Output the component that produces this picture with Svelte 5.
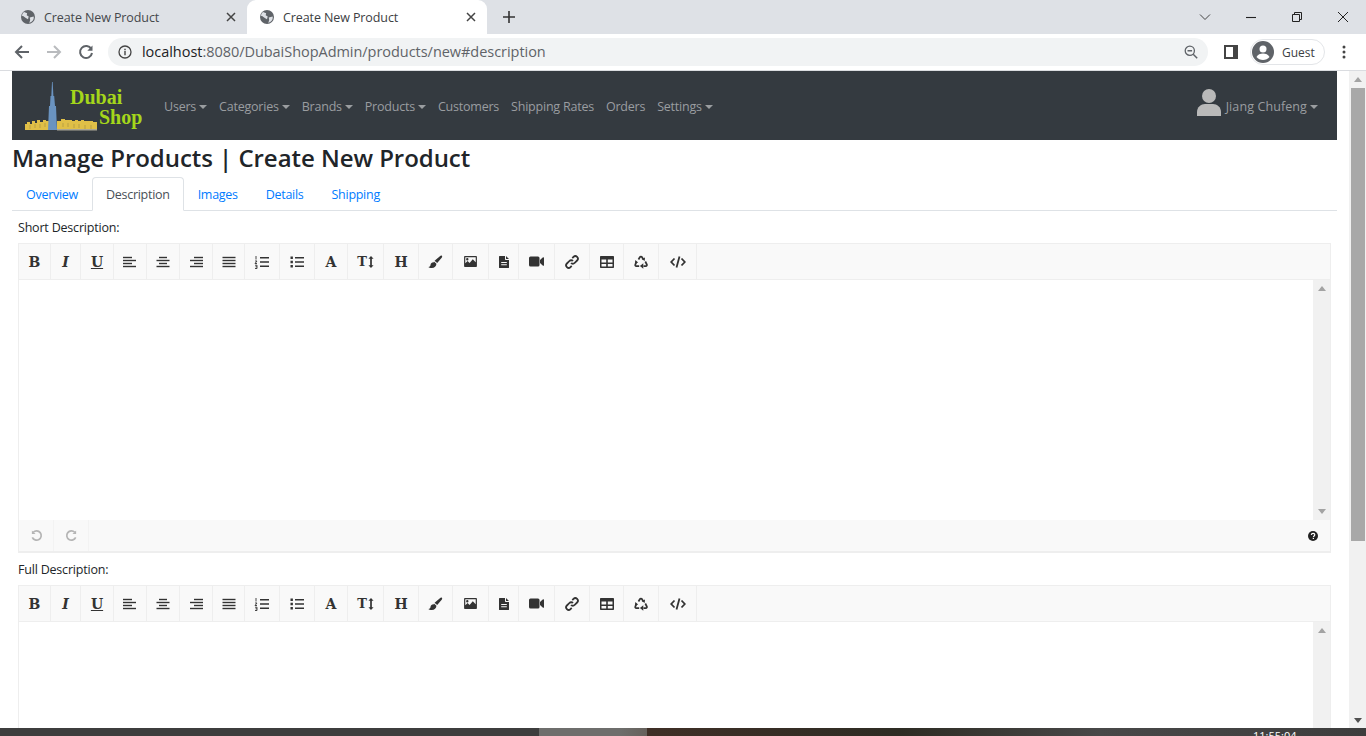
<script>
  const navItems = [
    { label: 'Users', caret: true },
    { label: 'Categories', caret: true },
    { label: 'Brands', caret: true },
    { label: 'Products', caret: true },
    { label: 'Customers', caret: false },
    { label: 'Shipping Rates', caret: false },
    { label: 'Orders', caret: false },
    { label: 'Settings', caret: true }
  ];
  const tabs = ['Overview', 'Description', 'Images', 'Details', 'Shipping'];
  const tools = [
    { w: 32, t: 'B' }, { w: 30, t: 'I', cls: 'it' }, { w: 33, t: 'U', cls: 'un' },
    { w: 33, i: 'left' }, { w: 33, i: 'center' }, { w: 33, i: 'right' }, { w: 32, i: 'just' },
    { w: 35, i: 'ol' }, { w: 35, i: 'ul' }, { w: 33, t: 'A' }, { w: 36, i: 'size' },
    { w: 35, t: 'H' }, { w: 34, i: 'brush' }, { w: 36, i: 'pic' }, { w: 30, i: 'file' },
    { w: 36, i: 'video' }, { w: 35, i: 'link' }, { w: 34, i: 'table' }, { w: 35, i: 'recycle' }, { w: 38, i: 'code' }
  ];
  const lines = {
    left: [[1, 2.5, 9], [1, 5.5, 13], [1, 8.5, 9], [1, 11.5, 13]],
    center: [[4, 2.5, 8], [1.500, 5.5, 13], [4, 8.5, 8], [1.500, 11.5, 13]],
    right: [[6, 2.5, 9], [2, 5.5, 13], [6, 8.5, 9], [2, 11.5, 13]],
    just: [[1.500, 2.5, 13], [1.500, 5.5, 13], [1.500, 8.5, 13], [1.500, 11.5, 13]]
  };
</script>

{#snippet globe()}
  <svg class="globe" viewBox="0 0 16 16" width="16" height="16" aria-hidden="true">
    <circle cx="8" cy="8" r="8" fill="#5f6368" />
    <path d="M3.500 2.200 7 3.800 6.500 6 8.800 7.500 8 10.500 5.500 9 2 6.500 1 7C1.200 5 2 3.300 3.500 2.200ZM10 8.500l4.500-1C15 10 14 12 12 13.500L9.500 14.800 10.500 11.500Z" fill="#dee1e6" />
  </svg>
{/snippet}

{#snippet tool(b)}
  {#if b.t}
    <span class="glyph {b.cls ?? ''}">{b.t}</span>
  {:else if lines[b.i]}
    <svg viewBox="0 0 16 14" width="16" height="14" aria-hidden="true">
      {#each lines[b.i] as l}<rect x={l[0]} y={l[1] - 0.7} width={l[2]} height="1.4" fill="#333" />{/each}
    </svg>
  {:else if b.i === 'ol'}
    <svg viewBox="0 0 16 14" width="16" height="14" aria-hidden="true">
      <path d="M6 2h9v1.400H6zM6 6.300h9v1.400H6zM6 10.600h9v1.400H6z" fill="#333" />
      <path d="M2 1v3.500M1 6h2L1 8.500h2M1 10.200h2v3.300H1M1.500 11.800H3" stroke="#333" fill="none" stroke-width="0.900" />
    </svg>
  {:else if b.i === 'ul'}
    <svg viewBox="0 0 16 14" width="16" height="14" aria-hidden="true">
      <path d="M6 2h9v1.500H6zM6 6.200h9v1.500H6zM6 10.500h9V12H6z" fill="#333" />
      <path d="M1.500 1.500h2.400v2.400H1.500zM1.500 5.800h2.400v2.400H1.500zM1.500 10h2.400v2.400H1.500z" fill="#333" />
    </svg>
  {:else if b.i === 'size'}
    <span class="sizer"><span class="glyph small">T</span>
      <svg viewBox="0 0 7 14" width="6" height="12" aria-hidden="true"><path d="M3.500 0 6.500 3.200H4.500v7.600h2L3.500 14 .5 10.800h2V3.200h-2Z" fill="#333" /></svg>
    </span>
  {:else if b.i === 'brush'}
    <svg viewBox="0 0 16 14" width="15" height="14" aria-hidden="true">
      <path d="M14.800.4c.6.500.3 1.400-.2 2L9.800 8 7 5.600 12.700.8c.7-.6 1.500-.9 2.100-.4ZM6.300 6.400 9 8.800c-.2 2.500-2 4.700-5 4.700-1.700 0-3-.6-3.500-1.200 1.600-.2 2-1 2.200-2.400.2-1.500 1.700-2.700 3.600-2.500Z" fill="#333" />
    </svg>
  {:else if b.i === 'pic'}
    <svg viewBox="0 0 14 12" width="13" height="11" aria-hidden="true">
      <path fill-rule="evenodd" d="M.8 0h12.400c.4 0 .8.400.8.800v10.400c0 .4-.4.800-.8.800H.8c-.4 0-.8-.4-.8-.8V.8C0 .4.400 0 .8 0ZM1.300 1.300v6.500l2.500-2.300 2.200 2L9.500 3.500 12.700 6.800V1.300ZM3.500 2.200a1.300 1.300 0 1 0 0 2.600 1.300 1.300 0 0 0 0-2.600Z" fill="#333" />
    </svg>
  {:else if b.i === 'file'}
    <svg viewBox="0 0 10 12" width="10" height="12" aria-hidden="true">
      <path fill-rule="evenodd" d="M.6 0H6v3.200c0 .4.300.7.700.7H10v7.500c0 .3-.3.600-.6.600H.6c-.3 0-.6-.3-.6-.6V.6C0 .3.300 0 .6 0ZM2.200 6v1h5.600V6Zm0 2.200v1h5.600v-1ZM7 0l3 3H7Z" fill="#333" />
    </svg>
  {:else if b.i === 'video'}
    <svg viewBox="0 0 15 11" width="15" height="11" aria-hidden="true">
      <rect x="0" y="0.500" width="10.500" height="10" rx="1.500" fill="#333" />
      <path d="M11 4 14 1.300c.4-.3 1-.1 1 .4v7.600c0 .5-.6.700-1 .4L11 7Z" fill="#333" />
    </svg>
  {:else if b.i === 'link'}
    <svg viewBox="0 0 14 14" width="14" height="14" aria-hidden="true" fill="none" stroke="#333" stroke-width="1.800">
      <path d="M6 8a2.500 2.500 0 0 0 3.600 0l2.500-2.500a2.500 2.500 0 0 0-3.600-3.600L7.300 3.100" />
      <path d="M8 6a2.500 2.500 0 0 0-3.600 0L1.900 8.500a2.500 2.500 0 0 0 3.600 3.600l1.200-1.200" />
    </svg>
  {:else if b.i === 'table'}
    <svg viewBox="0 0 14 12" width="14" height="12" aria-hidden="true">
      <path fill-rule="evenodd" d="M1 0h12c.6 0 1 .4 1 1v10c0 .6-.4 1-1 1H1c-.6 0-1-.4-1-1V1c0-.6.400-1 1-1Zm.5 3.500v3h4.700v-3Zm6.300 0v3h4.700v-3Zm-6.300 4.500v2.500h4.700V8Zm6.300 0v2.500h4.700V8Z" fill="#333" />
    </svg>
  {:else if b.i === 'recycle'}
    <svg viewBox="0 0 14 14" width="14" height="14" aria-hidden="true" fill="none" stroke="#333" stroke-width="1.700">
      <path d="M4.500 4.500 5.800 2.300c.4-.8 1.800-.8 2.300 0l1.100 1.900" />
      <path d="M11.300 6.500l1.500 3c.4.800-.1 1.600-1 1.600H9.500" />
      <path d="M5.200 11.100H2.300c-.9 0-1.400-.9-1-1.600l1.300-2.600" />
      <path d="M7.600 3.900l3.100 2 .3-3.300ZM1.300 5.100l-.4 3.300 3.300-1ZM9.300 8.300v5.400L5.900 11Z" fill="#333" stroke="none" />
    </svg>
  {:else if b.i === 'code'}
    <svg viewBox="0 0 16 12" width="16" height="12" aria-hidden="true" fill="none" stroke="#333" stroke-width="1.800">
      <path d="M4.500 2.500 1.200 6l3.300 3.500M11.500 2.500 14.800 6l-3.300 3.500M9.500.6 6.500 11.400" />
    </svg>
  {/if}
{/snippet}

{#snippet editor(label, showStatus)}
  <div class="label">{label}</div>
  <div class="editor">
    <div class="toolbar">
      {#each tools as b}
        <span class="tbtn" style="width:{b.w}px">{@render tool(b)}</span>
      {/each}
    </div>
    <div class="area">
      <div class="text"></div>
      <div class="inner-sb">
        <i class="up"></i>
        {#if showStatus}<i class="down"></i>{/if}
      </div>
    </div>
    {#if showStatus}
      <div class="status">
        <span class="hbtn">
          <svg viewBox="0 0 14 14" width="13" height="13" aria-hidden="true" fill="none" stroke="#b5b5b5" stroke-width="1.800">
            <path d="M3.500 3.500a5 5 0 1 1-1 5.500" /><path d="M2 1.500v4h4z" fill="#b5b5b5" stroke="none" />
          </svg>
        </span>
        <span class="hbtn">
          <svg viewBox="0 0 14 14" width="13" height="13" aria-hidden="true" fill="none" stroke="#b5b5b5" stroke-width="1.800">
            <path d="M10.500 3.500a5 5 0 1 0 1 5.500" /><path d="M12 1.500v4H8z" fill="#b5b5b5" stroke="none" />
          </svg>
        </span>
        <svg class="help" viewBox="0 0 10 10" width="10" height="10" aria-hidden="true">
          <circle cx="5" cy="5" r="5" fill="#222" />
          <path d="M3.300 3.900C3.400 2.900 4.100 2.300 5.100 2.300s1.700.6 1.700 1.500c0 1.200-1.300 1.200-1.300 2.200" fill="none" stroke="#fff" stroke-width="1.200" />
          <rect x="4.700" y="6.800" width="1.300" height="1.200" fill="#fff" />
        </svg>
      </div>
    {/if}
  </div>
{/snippet}

<div class="screen">
  <header class="chrome">
    <div class="strip">
      <div class="tab">
        {@render globe()}
        <span class="title">Create New Product</span>
        <svg class="x" viewBox="0 0 10 10" width="10" height="10" aria-hidden="true"><path d="M1 1l8 8M9 1 1 9" stroke="#444" stroke-width="1.500" /></svg>
      </div>
      <div class="tab active">
        {@render globe()}
        <span class="title">Create New Product</span>
        <svg class="x" viewBox="0 0 10 10" width="10" height="10" aria-hidden="true"><path d="M1 1l8 8M9 1 1 9" stroke="#444" stroke-width="1.500" /></svg>
      </div>
      <svg class="plus" viewBox="0 0 12 12" width="12" height="12" aria-hidden="true"><path d="M6 0v12M0 6h12" stroke="#333" stroke-width="1.600" /></svg>
      <div class="winctl">
        <svg viewBox="0 0 12 12" width="12" height="12" aria-hidden="true"><path d="M1 3.500 6 8.500 11 3.500" fill="none" stroke="#444" /></svg>
        <svg viewBox="0 0 12 12" width="12" height="12" aria-hidden="true"><path d="M1 6.500h10" stroke="#222" stroke-width="1.100" /></svg>
        <svg viewBox="0 0 12 12" width="12" height="12" aria-hidden="true"><path d="M1.500 3.500h7v7h-7zM3.500 3.500v-2h7v7h-2" fill="none" stroke="#222" /></svg>
        <svg viewBox="0 0 12 12" width="12" height="12" aria-hidden="true"><path d="M1 1l10 10M11 1 1 11" stroke="#222" /></svg>
      </div>
    </div>
    <div class="bar">
      <svg class="nav" viewBox="0 0 16 16" width="16" height="16" aria-hidden="true"><path d="M15 8H2M8 2 2 8l6 6" fill="none" stroke="#5f6368" stroke-width="2" /></svg>
      <svg class="nav" viewBox="0 0 16 16" width="16" height="16" aria-hidden="true"><path d="M1 8h13M8 2l6 6-6 6" fill="none" stroke="#b9bbbe" stroke-width="2" /></svg>
      <svg class="nav" viewBox="0 0 16 16" width="16" height="16" aria-hidden="true"><path d="M13.300 5A6 6 0 1 0 14 9" fill="none" stroke="#5f6368" stroke-width="2" /><path d="M14.500 1.500v5.200H9.300z" fill="#5f6368" /></svg>
      <div class="omni">
        <svg viewBox="0 0 14 14" width="14" height="14" aria-hidden="true"><circle cx="7" cy="7" r="6" fill="none" stroke="#444" stroke-width="1.300" /><path d="M7 6v4.200M7 3.800v1.400" stroke="#444" stroke-width="1.400" /></svg>
        <span class="url"><b>localhost</b>:8080/DubaiShopAdmin/products/new#description</span>
        <svg class="zoomico" viewBox="0 0 14 14" width="14" height="14" aria-hidden="true"><circle cx="5.800" cy="5.800" r="4.600" fill="none" stroke="#5f6368" stroke-width="1.300" /><path d="M3.500 5.800h4.600M9.200 9.200l4 4" stroke="#5f6368" stroke-width="1.500" /></svg>
      </div>
      <svg class="side" viewBox="0 0 14 14" width="14" height="14" aria-hidden="true"><path fill-rule="evenodd" d="M0 0h14v14H0zM2 2v10h7V2z" fill="#444" /></svg>
      <div class="guest">
        <svg viewBox="0 0 22 22" width="22" height="22" aria-hidden="true"><circle cx="11" cy="11" r="11" fill="#5f6368" /><circle cx="11" cy="8" r="3.500" fill="#fff" /><path d="M4.500 16c1-2.500 4-3.500 6.500-3.500s5.500 1 6.500 3.500c-1.500 2-4 3-6.500 3s-5-1-6.500-3Z" fill="#fff" /></svg>
        <span>Guest</span>
      </div>
      <svg class="kebab" viewBox="0 0 4 14" width="4" height="14" aria-hidden="true"><circle cx="2" cy="2" r="1.500" fill="#444" /><circle cx="2" cy="7" r="1.500" fill="#444" /><circle cx="2" cy="12" r="1.500" fill="#444" /></svg>
    </div>
  </header>

  <div class="viewport">
    <main class="page">
      <nav class="navbar">
        <div class="logo">
          <svg viewBox="0 0 73 49" width="73" height="49" aria-hidden="true">
            <path d="M0 48V42H2V40H5V42H7V39H10V41H12V38H15V40H18V38H21V39H24V48ZM32 48V39H36V37H40V38H44V38H47V39H50V38H53V39H56V38H59V39H62V39H65V39H68V40H72V48Z" fill="#e0bf47" />
            <path d="M5 43v4M10 42v4M15 42v4M20 41v4M38 41v4M43 41v4M49 42v4M54 42v4M60 43v4M66 43v4" stroke="#b89f45" stroke-width="1" />
            <path d="M32 47h40v1.500H32z" fill="#a9a595" />
            <path d="M23 48 24 24H25L25.500 14H26.300L27 0 27.700 0 28.400 14H29.200L30 24H31L32 48Z" fill="#6a93c0" />
          </svg>
          <div class="word"><span>Dubai</span><span class="shop">Shop</span></div>
        </div>
        <ul class="links">
          {#each navItems as n}
            <li class:caret={n.caret}>{n.label}</li>
          {/each}
        </ul>
        <div class="user">
          <svg viewBox="0 0 24 27" width="24" height="27" aria-hidden="true"><circle cx="12" cy="7" r="7" fill="#b9b9b9" /><path d="M0 27v-4c0-5 4-8 8-8h8c4 0 8 3 8 8v4Z" fill="#b9b9b9" /></svg>
          <span class="caret">Jiang Chufeng</span>
        </div>
      </nav>
      <h2>Manage Products | Create New Product</h2>
      <div class="tabs">
        {#each tabs as t, i}
          <span class="ptab" class:on={i === 1}>{t}</span>
        {/each}
      </div>
      <div class="panel">
        {@render editor('Short Description:', true)}
        {@render editor('Full Description:', false)}
      </div>
    </main>
    <aside class="scroll">
      <i class="up"></i>
      <div class="thumb"></div>
      <i class="down"></i>
    </aside>
  </div>
  <footer class="taskbar"><span class="clock">11:55:04</span></footer>
</div>

<style>
  :global(body) { margin: 0; background: #fff; font-family: "Open Sans", "Noto Sans", sans-serif; }
  .screen { width: 1366px; height: 736px; display: flex; flex-direction: column; overflow: hidden; }
  .chrome { flex: none; }
  .strip { height: 34px; background: #dee1e6; display: flex; align-items: center; padding-left: 8px; }
  .tab { width: 239px; height: 34px; box-sizing: border-box; padding: 0 11px 0 13px; display: flex; align-items: center; color: #45484c; font-size: 12.500px; letter-spacing: -0.1px; }
  .tab.active { background: #fff; border-radius: 9px 9px 0 0; color: #3c4043; width: 240px; }
  .globe { flex: none; width: 14px; height: 14px; margin-right: 9px; }
  .title { flex: 1; }
  .plus { margin-left: 16px; }
  .winctl { margin-left: auto; display: flex; gap: 34px; padding-right: 17px; }
  .bar { height: 37px; box-sizing: border-box; border-bottom: 1px solid #dadce0; background: #fff; display: flex; align-items: center; padding: 0 0 0 14px; }
  .nav { margin-right: 16px; }
  .nav:nth-child(3) { margin-right: 14px; }
  .omni { width: 1100px; height: 28px; box-sizing: border-box; background: #f1f3f4; border-radius: 14px; display: flex; align-items: center; padding: 0 10px 0 10px; }
  .url { margin-left: 10px; flex: 1; font-size: 14.500px; color: #5f6368; letter-spacing: -0.04px; line-height: 26px; }
  .url b { font-weight: 400; color: #202124; }
  .side { margin-left: 16px; }
  .guest { margin-left: 12px; width: 75px; height: 26px; box-sizing: border-box; border: 1px solid #e3e5e8; border-radius: 13px; display: flex; align-items: center; gap: 8px; padding-left: 1px; font-size: 12px; color: #3c4043; }
  .kebab { margin-left: 17px; }
  .viewport { flex: 1; min-height: 0; display: flex; }
  .page { flex: 1; min-width: 0; padding: 0 12px; overflow: hidden; color: #212529; }
  .navbar { height: 69px; background: #343a40; display: flex; align-items: center; padding-left: 13px; }
  .logo { width: 139px; display: flex; align-items: flex-end; height: 49px; margin-top: 1px; flex: none; }
  .logo svg { flex: none; }
  .word { display: flex; flex-direction: column; margin-left: -28px; margin-bottom: 4px; font-family: "Liberation Serif", serif; font-weight: 700; font-size: 20px; line-height: 20px; color: #a5d61b; }
  .shop { margin-left: 29px; }
  .links { list-style: none; margin: 2px 0 0; padding: 0; display: flex; gap: 12px; font-size: 12.500px; letter-spacing: -0.22px; color: #9a9da0; }
  .caret::after { content: ""; display: inline-block; margin-left: 3px; vertical-align: 2px; border-top: 4px solid; border-left: 4px solid transparent; border-right: 4px solid transparent; }
  .user { margin-left: auto; padding-right: 19px; display: flex; align-items: center; gap: 5px; font-size: 12.500px; letter-spacing: 0.1px; color: #9a9da0; }
  .user svg { margin-top: -6px; }
  .user span { margin-top: 2px; }
  h2 { margin: 0; height: 37px; font-size: 24px; line-height: 35px; letter-spacing: -0.05px; color: #212529; font-weight: 600; }
  .tabs { display: flex; height: 34px; box-sizing: border-box; border-bottom: 1px solid #dee2e6; }
  .ptab { height: 34px; box-sizing: border-box; padding: 0 13px; display: flex; align-items: center; font-size: 12.500px; letter-spacing: -0.28px; color: #007bff; border: 1px solid transparent; border-radius: 4px 4px 0 0; }
  .ptab.on { color: #495057; background: #fff; border-color: #dee2e6 #dee2e6 #fff; }
  .panel { padding: 0 6px; }
  .label { height: 32px; padding-top: 9px; box-sizing: border-box; font-size: 12.500px; letter-spacing: -0.2px; color: #212529; line-height: 16px; }
  .editor { border: 1px solid #eee; border-bottom-width: 2px; }
  .toolbar { display: flex; height: 35px; background: #f9f9f9; border-bottom: 1px solid #eee; }
  .tbtn { flex: none; box-sizing: border-box; border-right: 1px solid #eee; display: flex; align-items: center; justify-content: center; }
  .glyph { font-family: "DejaVu Serif", serif; font-weight: 700; font-size: 14px; color: #333; line-height: 1; }
  .glyph.small { font-size: 13px; }
  .glyph.it { font-style: italic; }
  .glyph.un { text-decoration: underline; text-underline-offset: 1px; }
  .sizer { display: flex; align-items: center; gap: 1px; }
  .area { display: flex; height: 240px; background: #fff; }
  .text { flex: 1; }
  .inner-sb { width: 17px; background: #f1f1f1; position: relative; }
  .up, .down { position: absolute; left: 5px; width: 0; height: 0; border-left: 4px solid transparent; border-right: 4px solid transparent; }
  .up { top: 6px; border-bottom: 5px solid #a3a3a3; }
  .down { bottom: 6px; border-top: 5px solid #a3a3a3; }
  .status { height: 31px; background: #f9f9f9; display: flex; align-items: center; }
  .hbtn { width: 35px; height: 31px; border-right: 1px solid #f3f3f3; display: flex; align-items: center; justify-content: center; box-sizing: border-box; }
  .help { margin-left: auto; margin-right: 12px; }
  .scroll { width: 17px; flex: none; background: #f1f1f1; position: relative; }
  .scroll .down { border-top-color: #505050; bottom: 5px; }
  .thumb { position: absolute; left: 2px; right: 1px; top: 17px; height: 453px; background: #a8a8a8; }
  .taskbar { height: 8px; flex: none; position: relative; overflow: hidden; background: linear-gradient(90deg, #3d3d3d 0 539px, #6e6e6c 539px 620px, #66615c 647px, #3f2f26 647px, #2e2c24 900px, #484848 1100px, #3d3d3d 100%); }
  .clock { position: absolute; left: 1253px; top: 1px; color: #fff; font-size: 11px; line-height: 13px; }
</style>
